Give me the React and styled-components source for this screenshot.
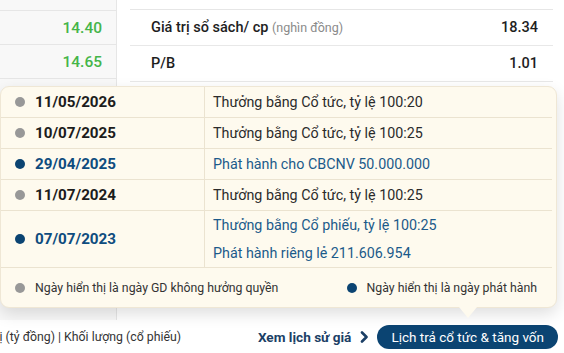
import styled, { createGlobalStyle } from 'styled-components'

const Global = createGlobalStyle`
    body {
        margin: 0;
        background: #ffffff;
        font-family: Roboto, "Noto Sans", sans-serif;
    }
`

const events = [
    { date: '11/05/2026', kind: 'gd', items: ['Thưởng bằng Cổ tức, tỷ lệ 100:20'] },
    { date: '10/07/2025', kind: 'gd', items: ['Thưởng bằng Cổ tức, tỷ lệ 100:25'] },
    { date: '29/04/2025', kind: 'ph', items: ['Phát hành cho CBCNV 50.000.000'] },
    { date: '11/07/2024', kind: 'gd', items: ['Thưởng bằng Cổ tức, tỷ lệ 100:25'] },
    { date: '07/07/2023', kind: 'ph', items: ['Thưởng bằng Cổ phiếu, tỷ lệ 100:25', 'Phát hành riêng lẻ 211.606.954'] },
]

export default function App(){
    return(
        <>
        <Global/>
        <Page>
            <Content>
                <LeftCol>
                    <Stub h={10}/>
                    <PriceRow>14.40</PriceRow>
                    <PriceRow>14.65</PriceRow>
                </LeftCol>
                <RightCol>
                    <Stub h={9}/>
                    <InfoRow>
                        <span>Giá trị sổ sách/ cp <Unit>(nghìn đồng)</Unit></span>
                        <span>18.34</span>
                    </InfoRow>
                    <InfoRow>
                        <span>P/B</span>
                        <span>1.01</span>
                    </InfoRow>
                </RightCol>
            </Content>
            <Bottom>
                <Legend2>Giá trị (tỷ đồng) | Khối lượng (cổ phiếu)</Legend2>
                <Actions>
                    <HistLink>
                        Xem lịch sử giá
                        <svg width="9" height="12" viewBox="0 0 9 12">
                            <polyline points="2,1.5 6.5,6 2,10.5" fill="none" stroke="#1b3f66" strokeWidth="2.6" strokeLinecap="round" strokeLinejoin="round"/>
                        </svg>
                    </HistLink>
                    <PillBtn>Lịch trả cổ tức &amp; tăng vốn</PillBtn>
                </Actions>
            </Bottom>
            <Popup>
                {events.map((e, i) => (
                    <EvRow key={i}>
                        <DateCell blue={e.kind === 'ph'}>
                            <Dot blue={e.kind === 'ph'}/>
                            {e.date}
                        </DateCell>
                        <DescCell>
                            {e.items.map((t, j) => (
                                <Desc key={j} blue={e.kind === 'ph'} multi={e.items.length > 1}>{t}</Desc>
                            ))}
                        </DescCell>
                    </EvRow>
                ))}
                <LegendRow>
                    <LegendItem><Dot/>Ngày hiển thị là ngày GD không hưởng quyền</LegendItem>
                    <LegendItem><Dot blue/>Ngày hiển thị là ngày phát hành</LegendItem>
                </LegendRow>
                <Caret/>
            </Popup>
        </Page>
        </>
    )
}

const Page = styled.div`
    position: relative;
    width: 564px;
    height: 353px;
    overflow: hidden;
    background: #ffffff;
`
const Content = styled.div`
    display: flex;
    height: 320px;
    gap: 13px;
`
const LeftCol = styled.div`
    width: 117px;
    background: #f8f8f8;
    border-right: 1px solid #e6e6e6;
    box-sizing: border-box;
`
const Stub = styled.div`
    height: ${p => p.h}px;
    border-bottom: 1px solid #e6e6e6;
`
const PriceRow = styled.div`
    height: 33px;
    border-bottom: 1px solid #e6e6e6;
    display: flex;
    align-items: center;
    justify-content: flex-end;
    padding-right: 14px;
    color: #45b549;
    font-size: 15.5px;
    font-weight: 500;
`
const RightCol = styled.div`
    width: 423px;
`
const InfoRow = styled.div`
    height: 35px;
    border-bottom: 1px solid #e8e8e8;
    display: flex;
    align-items: center;
    justify-content: space-between;
    padding: 0 15px 0 21px;
    color: #1e1e1e;
    font-size: 14.5px;
    font-weight: 500;
`
const Unit = styled.span`
    color: #8a8a8a;
    font-size: 12.5px;
    font-weight: 400;
`
const Bottom = styled.div`
    height: 33px;
    display: flex;
    align-items: center;
    justify-content: space-between;
    padding-right: 6px;
`
const Legend2 = styled.div`
    width: 181px;
    display: flex;
    justify-content: flex-end;
    overflow: hidden;
    white-space: nowrap;
    font-size: 12.3px;
    color: #333333;
`
const Actions = styled.div`
    display: flex;
    align-items: center;
    gap: 8px;
`
const HistLink = styled.div`
    display: flex;
    align-items: center;
    gap: 9px;
    font-size: 13.6px;
    font-weight: 700;
    color: #1b3f66;
`
const PillBtn = styled.button`
    height: 24px;
    padding: 0 14px;
    border: none;
    border-radius: 12px;
    background: #0b4472;
    color: #ffffff;
    font-family: Roboto, "Noto Sans", sans-serif;
    font-size: 13.5px;
    white-space: nowrap;
`
const Popup = styled.div`
    position: absolute;
    top: 86px;
    left: 0;
    width: 557px;
    box-sizing: border-box;
    background: #fefaee;
    border: 1px solid #efe7d5;
    border-radius: 9px;
    box-shadow: 0 6px 16px rgba(0, 0, 0, 0.13);
`
const EvRow = styled.div`
    display: flex;
    border-bottom: 1px solid #ebe3d0;
    margin-right: 4px;
`
const DateCell = styled.div`
    width: 204px;
    box-sizing: border-box;
    display: flex;
    align-items: center;
    gap: 10px;
    padding-left: 14px;
    font-size: 15.2px;
    font-weight: 700;
    color: ${p => p.blue ? '#0e4c7e' : '#1c1c1c'};
    border-right: 1px solid #ebe3d0;
`
const Dot = styled.span`
    width: 10px;
    height: 10px;
    border-radius: 50%;
    flex-shrink: 0;
    background: ${p => p.blue ? '#0b4472' : '#989898'};
`
const DescCell = styled.div`
    flex: 1;
    padding-left: 8px;
    display: flex;
    flex-direction: column;
    justify-content: center;
`
const Desc = styled.div`
    line-height: ${p => p.multi ? '28px' : '30px'};
    font-size: 14.3px;
    color: ${p => p.blue ? '#1c5a8a' : '#2b2b2b'};
`
const LegendRow = styled.div`
    height: 39px;
    display: flex;
    align-items: center;
    justify-content: space-between;
    padding: 0 19px 0 14px;
`
const LegendItem = styled.div`
    display: flex;
    align-items: center;
    gap: 10px;
    font-size: 12.3px;
    color: #333333;
`
const Caret = styled.div`
    position: absolute;
    left: 458px;
    bottom: -11px;
    width: 0;
    height: 0;
    border-left: 9px solid transparent;
    border-right: 9px solid transparent;
    border-top: 11px solid #fefaee;
`
